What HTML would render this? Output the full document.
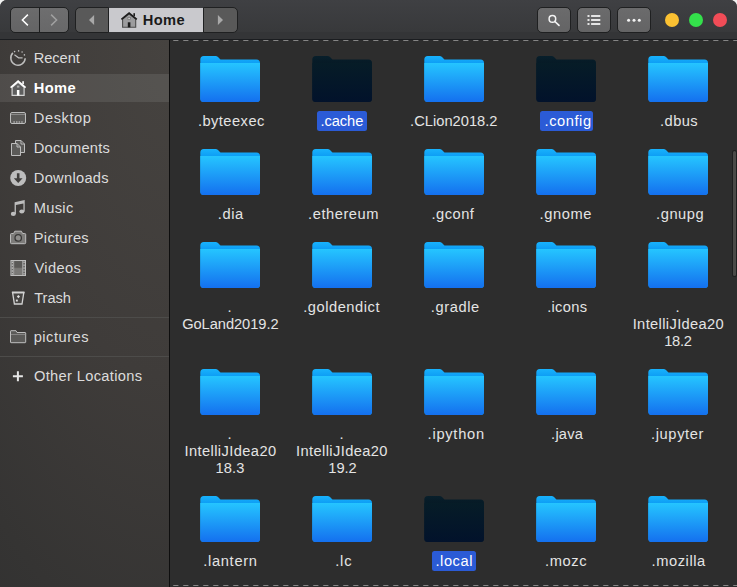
<!DOCTYPE html>
<html lang="en"><head><meta charset="utf-8"><title>Home</title>
<style>
html,body{margin:0;padding:0;background:#f2f2f2;}
body{width:737px;height:587px;position:relative;overflow:hidden;font-family:"Liberation Sans", sans-serif;font-size:14.67px;color:#e6e6e6;}
#win{position:absolute;left:0;top:0;width:737px;height:587px;background:#2d2d2d;border-radius:7px 7px 0 0;overflow:hidden;}
#hdr{position:absolute;left:0;top:0;width:737px;height:39px;background:linear-gradient(#3f4043 0,#38393b 31.5px,#343537 32px,#343537 100%);border-bottom:1px solid #1b1d20;}
.btn{position:absolute;top:7px;height:26px;box-sizing:border-box;border:1px solid #1f2021;background:linear-gradient(#6b6b6c,#646465);}
#side{position:absolute;left:0;top:40px;width:169px;height:547px;background:radial-gradient(ellipse 350px 750px at 100% 0%,#464340 0%,#3f3c3a 45%,#353433 80%,#303030 100%);border-right:1px solid #0e0e0e;}
.si{position:absolute;left:0;width:169px;height:30px;}
.si span{position:absolute;top:0;line-height:30px;white-space:nowrap;color:#dcdcdc;}
.si svg{position:absolute;left:10px;top:7px;overflow:visible;}
.sep{position:absolute;left:0;width:169px;height:1px;background:#4d4c4a;}
#main{position:absolute;left:170px;top:40px;width:567px;height:547px;background:#2d2d2d;}
.dash{position:absolute;left:3.4px;width:563.6px;height:1px;background:repeating-linear-gradient(90deg,rgba(136,136,136,.3) 0,#858585 .8px,#858585 4.9px,rgba(136,136,136,.2) 5.7px,transparent 5.8px,transparent 10px);}
.fo{position:absolute;}
.l{position:absolute;line-height:17px;height:17px;white-space:nowrap;color:#e4e4e4;}
.l.c{transform:translateX(-50%);}
.l.w{color:#fff;}
.sb{position:absolute;height:20px;background:#2b5bd6;border-radius:2.5px;}
</style></head><body><div id="win">

<svg width="0" height="0" style="position:absolute"><defs><linearGradient id="fb" x1="0" y1="0" x2="0" y2="1"><stop offset="0" stop-color="#25c5ff"/><stop offset="1" stop-color="#1470ef"/></linearGradient><linearGradient id="fd" x1="0" y1="0" x2="0" y2="1"><stop offset="0" stop-color="#061c27"/><stop offset="1" stop-color="#02122b"/></linearGradient><linearGradient id="fk" gradientUnits="userSpaceOnUse" x1="0" y1="0" x2="0" y2="7"><stop offset="0" stop-color="#18b2fc"/><stop offset="1" stop-color="#0e9ef5"/></linearGradient><linearGradient id="fe" gradientUnits="userSpaceOnUse" x1="0" y1="0" x2="0" y2="7"><stop offset="0" stop-color="#081f2b"/><stop offset="1" stop-color="#061a26"/></linearGradient></defs></svg>

<div id="hdr">
<div class="btn" style="left:10px;width:30px;border-radius:5px 0 0 5px;"></div>
<div class="btn" style="left:39px;width:30px;border-radius:0 5px 5px 0;background:linear-gradient(#6e6e6f,#686869);"></div>
<svg style="position:absolute;left:0;top:0" width="80" height="40" viewBox="0 0 80 40"><path d="M27.9 14.6 L22.4 20 L27.9 25.4" fill="none" stroke="#fff" stroke-width="1.5"/><path d="M51.1 14.6 L56.6 20 L51.1 25.4" fill="none" stroke="#a0a0a0" stroke-width="1.5"/></svg>
<div class="btn" style="left:75px;width:34px;border-radius:5px 0 0 5px;background:#595959;"></div>
<div class="btn" style="left:203px;width:34.5px;border-radius:0 5px 5px 0;background:#595959;"></div>
<div style="position:absolute;left:109px;top:8px;width:94px;height:24.3px;background:#c9c9cd;"></div>
<svg style="position:absolute;left:0;top:0" width="240" height="40" viewBox="0 0 240 40"><path d="M94.1 15 L89 20 L94.1 25Z" fill="#a8a8a8"/><path d="M217.9 15 L223 20 L217.9 25Z" fill="#a8a8a8"/></svg>
<svg style="position:absolute;left:121px;top:12px;overflow:visible" width="16" height="16" viewBox="0 0 16 16"><path d="M1.6 7 V15.2 H14.7 V7 L8.1 1.8 Z" fill="#9c9c9e" stroke="#4c4c4c" stroke-width="1.1"/><path d="M0.4 7.4 L8.1 1.1 L15.8 7.4" fill="none" stroke="#1e1e1e" stroke-width="1.7"/><rect x="12.4" y="1.2" width="1.6" height="3" fill="#1e1e1e"/><rect x="6.8" y="10.3" width="2.6" height="5" fill="#1a1a1a"/><rect x="6.9" y="5.4" width="2.4" height="2.2" fill="#c8c8c8" stroke="#6a6a6a" stroke-width=".6"/></svg>
<span id="hdrhome" style="position:absolute;left:142.80px;top:8px;line-height:24px;font-weight:bold;color:#1a1a1a;letter-spacing:0.350px">Home</span>
<div class="btn" style="left:537px;width:34px;border-radius:5px;"></div>
<div class="btn" style="left:577px;width:34px;border-radius:5px;"></div>
<div class="btn" style="left:617px;width:34px;border-radius:5px;"></div>
<svg style="position:absolute;left:538px;top:8px" width="112" height="24" viewBox="0 0 112 24"><circle cx="14.4" cy="10.9" r="3.3" fill="none" stroke="#f2f2f2" stroke-width="1.5"/><path d="M16.9 13.5 L21 17.4" stroke="#f2f2f2" stroke-width="1.7" stroke-linecap="round"/><g fill="#f2f2f2"><rect x="49.5" y="7.1" width="2" height="1.8"/><rect x="49.5" y="11.1" width="2" height="1.8"/><rect x="49.5" y="15.1" width="2" height="1.8"/><rect x="53.1" y="7.1" width="9.2" height="1.8"/><rect x="53.1" y="11.1" width="9.2" height="1.8"/><rect x="53.1" y="15.1" width="9.2" height="1.8"/><circle cx="90.6" cy="12.2" r="1.5"/><circle cx="96" cy="12.2" r="1.5"/><circle cx="101.3" cy="12.2" r="1.5"/></g></svg>
<div style="position:absolute;left:665px;top:13px;width:14px;height:14px;border-radius:50%;background:#fbc132;"></div>
<div style="position:absolute;left:689px;top:13px;width:14px;height:14px;border-radius:50%;background:#34e04b;"></div>
<div style="position:absolute;left:713px;top:13px;width:14px;height:14px;border-radius:50%;background:#f14c57;"></div>
</div>

<div id="side">
<div class="si" style="top:3px;"><svg width="16" height="16" viewBox="0 0 16 16"><path d="M2.9 2.9 A7.2 7.2 0 1 0 15.2 8.3" fill="none" stroke="#bdbdbd" stroke-width="1.5"/><g fill="#bdbdbd"><circle cx="4.6" cy="1.6" r=".8"/><circle cx="8.6" cy=".9" r=".8"/><circle cx="12.1" cy="2" r=".8"/><circle cx="14.4" cy="4.9" r=".8"/></g><path d="M4.4 4.8 L8.6 7.8 H12.6" fill="none" stroke="#bdbdbd" stroke-width="1.2"/></svg><span style="left:33.80px;letter-spacing:-0.090px;">Recent</span></div>
<div style="position:absolute;left:0;top:33.6px;width:169px;height:28.4px;background:rgba(255,255,255,0.09)"></div>
<div class="si" style="top:33px;"><svg width="16" height="16" viewBox="0 0 16 16"><path d="M2.1 7.2 V15.4 H14.1 V7.2 L8.1 2.2 Z" fill="#5e5e5e" stroke="#d4d4d4" stroke-width="1.2"/><path d="M0.6 7.6 L8.1 1.2 L15.6 7.6" fill="none" stroke="#fff" stroke-width="1.7"/><rect x="12.3" y="1.2" width="1.6" height="3" fill="#fff"/><rect x="6.9" y="10" width="2.5" height="5.6" fill="#fff"/><rect x="6.9" y="5.6" width="2.5" height="2" fill="#a8a8a8"/></svg><span style="left:33.70px;letter-spacing:0.400px;font-weight:bold;color:#fff;">Home</span></div>
<div class="si" style="top:63px;"><svg width="16" height="16" viewBox="0 0 16 16"><rect x=".5" y="2.5" width="15" height="11" rx="1.5" fill="#5b5a58" stroke="#bdbdbd"/><path d="M1 4.5 H15" stroke="#8a8988" stroke-width="1"/><g fill="#bdbdbd"><rect x="3.4" y="11.4" width="1.5" height="1.2"/><rect x="6" y="11.4" width="1.5" height="1.2"/><rect x="8.6" y="11.4" width="1.5" height="1.2"/><rect x="11.2" y="11.4" width="1.5" height="1.2"/></g></svg><span style="left:33.80px;letter-spacing:0.567px;">Desktop</span></div>
<div class="si" style="top:93px;"><svg width="16" height="16" viewBox="0 0 16 16"><path d="M5.5 .5 H11 L14.5 4 V12.5 H5.5 Z M11 .5 V4 H14.5" fill="#5b5a58" stroke="#bdbdbd"/><path d="M1.5 3.5 H7 L10.5 7 V15.5 H1.5 Z M7 3.5 V7 H10.5" fill="#5b5a58" stroke="#bdbdbd"/></svg><span style="left:33.80px;letter-spacing:0.238px;">Documents</span></div>
<div class="si" style="top:123px;"><svg width="16" height="16" viewBox="0 0 16 16"><circle cx="8.2" cy="8" r="8" fill="#bdbdbd"/><path d="M6.9 3.2 H9.5 V8.2 H12.6 L8.2 13 L3.8 8.2 H6.9 Z" fill="#403e3c"/></svg><span style="left:33.80px;letter-spacing:0.288px;">Downloads</span></div>
<div class="si" style="top:153px;"><svg width="16" height="16" viewBox="0 0 16 16"><g fill="#bdbdbd"><ellipse cx="3.3" cy="13.9" rx="2.5" ry="2.1"/><ellipse cx="11.8" cy="11.5" rx="2.5" ry="2.1"/><path d="M4.6 2.2 L14.7 0 V11.6 H13.4 V3.4 L5.9 5.1 V14 H4.6 Z"/></g></svg><span style="left:33.80px;letter-spacing:0.287px;">Music</span></div>
<div class="si" style="top:183px;"><svg width="16" height="16" viewBox="0 0 16 16"><path d="M1.5 3.5 H3.6 L4.8 1.2 H11.4 L12.6 3.5 H14.7 Q15.7 3.5 15.7 4.5 V12.7 Q15.7 13.7 14.7 13.7 H1.5 Q.5 13.7 .5 12.7 V4.5 Q.5 3.5 1.5 3.5Z" fill="#7d7c7a" stroke="#bdbdbd"/><circle cx="8.2" cy="7.9" r="3.2" fill="#8f8e8c" stroke="#3a3938" stroke-width="1.3"/></svg><span style="left:33.80px;letter-spacing:0.279px;">Pictures</span></div>
<div class="si" style="top:213px;"><svg width="16" height="16" viewBox="0 0 16 16"><rect x=".9" y=".5" width="14.6" height="15" fill="#6c6b69" stroke="#bdbdbd"/><rect x="4" y="1.2" width="8.4" height="6.4" fill="#5a5957"/><rect x="4" y="8.2" width="8.4" height="6.6" fill="#7a7977"/><path d="M3.7 .5 V15.5 M12.7 .5 V15.5" stroke="#bdbdbd" stroke-width=".7"/><g fill="#bdbdbd"><rect x="1.7" y="1.6" width="1.3" height="1.4"/><rect x="13.4" y="1.6" width="1.3" height="1.4"/><rect x="1.7" y="4.5" width="1.3" height="1.4"/><rect x="13.4" y="4.5" width="1.3" height="1.4"/><rect x="1.7" y="7.4" width="1.3" height="1.4"/><rect x="13.4" y="7.4" width="1.3" height="1.4"/><rect x="1.7" y="10.3" width="1.3" height="1.4"/><rect x="13.4" y="10.3" width="1.3" height="1.4"/><rect x="1.7" y="13.1" width="1.3" height="1.4"/><rect x="13.4" y="13.1" width="1.3" height="1.4"/></g></svg><span style="left:34.50px;letter-spacing:0.340px;">Videos</span></div>
<div class="si" style="top:243px;"><svg width="16" height="16" viewBox="0 0 16 16"><path d="M2.6 2.6 H13.8 L12 14 H4.4 Z" fill="#474543" stroke="#d2d2d2" stroke-width="1.3"/><path d="M1.9 2.4 H14.5" stroke="#d2d2d2" stroke-width="1.8"/><path d="M8.4 4.9 L10 6.6 L8.4 8.3 L6.8 6.6 Z" fill="#e0e0e0"/><rect x="5.9" y="9.6" width="1.9" height="1.9" fill="#e0e0e0"/></svg><span style="left:34.20px;letter-spacing:-0.050px;">Trash</span></div>
<div class="si" style="top:282px;"><svg width="16" height="16" viewBox="0 0 16 16"><path d="M.5 2.2 Q.5 1.7 1 1.7 H6 L7 3.5 H15.2 Q15.7 3.5 15.7 4 V13.2 Q15.7 13.7 15.2 13.7 H1 Q.5 13.7 .5 13.2 Z" fill="#5b5a58" stroke="#bdbdbd"/><path d="M1 5.5 H15.2" stroke="#8a8988" stroke-width=".9"/></svg><span style="left:33.70px;letter-spacing:0.500px;">pictures</span></div>
<div class="si" style="top:321px;"><svg width="16" height="16" viewBox="0 0 16 16"><path d="M2.9 8.2 H12.9 M7.9 3.2 V13.2" stroke="#e6e6e6" stroke-width="2"/></svg><span style="left:33.95px;letter-spacing:0.339px;">Other Locations</span></div>
<div class="sep" style="top:277px"></div><div class="sep" style="top:316px"></div>
</div>

<div id="main"><div class="dash" style="top:0"></div><div class="dash" style="top:545px"></div>
<svg class="fo" style="left:30px;top:16px" width="60" height="46" viewBox="0 0 60 46"><path d="M.3 3.5 Q.3 0 3.8 0 H15.5 Q17 0 18 1 L20.5 3.5 H56.5 Q60 3.5 60 7 V42.5 Q60 46 56.5 46 H3.8 Q.3 46 .3 42.5 Z" fill="url(#fk)"/><path d="M.3 7 H60 V42.5 Q60 46 56.5 46 H3.8 Q.3 46 .3 42.5 Z" fill="url(#fb)"/></svg>
<span class="l" style="left:27.90px;top:73px;letter-spacing:0.462px">.byteexec</span>
<svg class="fo" style="left:142px;top:16px" width="60" height="46" viewBox="0 0 60 46"><path d="M.3 3.5 Q.3 0 3.8 0 H15.5 Q17 0 18 1 L20.5 3.5 H56.5 Q60 3.5 60 7 V42.5 Q60 46 56.5 46 H3.8 Q.3 46 .3 42.5 Z" fill="url(#fe)"/><path d="M.3 7 H60 V42.5 Q60 46 56.5 46 H3.8 Q.3 46 .3 42.5 Z" fill="url(#fd)"/></svg>
<div class="sb" style="left:147px;top:71px;width:50px"></div>
<span class="l w" style="left:150.40px;top:73px;letter-spacing:-0.050px">.cache</span>
<svg class="fo" style="left:254px;top:16px" width="60" height="46" viewBox="0 0 60 46"><path d="M.3 3.5 Q.3 0 3.8 0 H15.5 Q17 0 18 1 L20.5 3.5 H56.5 Q60 3.5 60 7 V42.5 Q60 46 56.5 46 H3.8 Q.3 46 .3 42.5 Z" fill="url(#fk)"/><path d="M.3 7 H60 V42.5 Q60 46 56.5 46 H3.8 Q.3 46 .3 42.5 Z" fill="url(#fb)"/></svg>
<span class="l" style="left:240.05px;top:73px;letter-spacing:0.023px">.CLion2018.2</span>
<svg class="fo" style="left:366px;top:16px" width="60" height="46" viewBox="0 0 60 46"><path d="M.3 3.5 Q.3 0 3.8 0 H15.5 Q17 0 18 1 L20.5 3.5 H56.5 Q60 3.5 60 7 V42.5 Q60 46 56.5 46 H3.8 Q.3 46 .3 42.5 Z" fill="url(#fe)"/><path d="M.3 7 H60 V42.5 Q60 46 56.5 46 H3.8 Q.3 46 .3 42.5 Z" fill="url(#fd)"/></svg>
<div class="sb" style="left:370px;top:71px;width:53px"></div>
<span class="l w" style="left:374.60px;top:73px;letter-spacing:0.550px">.config</span>
<svg class="fo" style="left:478px;top:16px" width="60" height="46" viewBox="0 0 60 46"><path d="M.3 3.5 Q.3 0 3.8 0 H15.5 Q17 0 18 1 L20.5 3.5 H56.5 Q60 3.5 60 7 V42.5 Q60 46 56.5 46 H3.8 Q.3 46 .3 42.5 Z" fill="url(#fk)"/><path d="M.3 7 H60 V42.5 Q60 46 56.5 46 H3.8 Q.3 46 .3 42.5 Z" fill="url(#fb)"/></svg>
<span class="l" style="left:490.10px;top:73px;letter-spacing:0.438px">.dbus</span>
<svg class="fo" style="left:30px;top:109px" width="60" height="46" viewBox="0 0 60 46"><path d="M.3 3.5 Q.3 0 3.8 0 H15.5 Q17 0 18 1 L20.5 3.5 H56.5 Q60 3.5 60 7 V42.5 Q60 46 56.5 46 H3.8 Q.3 46 .3 42.5 Z" fill="url(#fk)"/><path d="M.3 7 H60 V42.5 Q60 46 56.5 46 H3.8 Q.3 46 .3 42.5 Z" fill="url(#fb)"/></svg>
<span class="l" style="left:47.70px;top:166px;letter-spacing:0.617px">.dia</span>
<svg class="fo" style="left:142px;top:109px" width="60" height="46" viewBox="0 0 60 46"><path d="M.3 3.5 Q.3 0 3.8 0 H15.5 Q17 0 18 1 L20.5 3.5 H56.5 Q60 3.5 60 7 V42.5 Q60 46 56.5 46 H3.8 Q.3 46 .3 42.5 Z" fill="url(#fk)"/><path d="M.3 7 H60 V42.5 Q60 46 56.5 46 H3.8 Q.3 46 .3 42.5 Z" fill="url(#fb)"/></svg>
<span class="l" style="left:138.10px;top:166px;letter-spacing:0.550px">.ethereum</span>
<svg class="fo" style="left:254px;top:109px" width="60" height="46" viewBox="0 0 60 46"><path d="M.3 3.5 Q.3 0 3.8 0 H15.5 Q17 0 18 1 L20.5 3.5 H56.5 Q60 3.5 60 7 V42.5 Q60 46 56.5 46 H3.8 Q.3 46 .3 42.5 Z" fill="url(#fk)"/><path d="M.3 7 H60 V42.5 Q60 46 56.5 46 H3.8 Q.3 46 .3 42.5 Z" fill="url(#fb)"/></svg>
<span class="l" style="left:261.55px;top:166px;letter-spacing:0.490px">.gconf</span>
<svg class="fo" style="left:366px;top:109px" width="60" height="46" viewBox="0 0 60 46"><path d="M.3 3.5 Q.3 0 3.8 0 H15.5 Q17 0 18 1 L20.5 3.5 H56.5 Q60 3.5 60 7 V42.5 Q60 46 56.5 46 H3.8 Q.3 46 .3 42.5 Z" fill="url(#fk)"/><path d="M.3 7 H60 V42.5 Q60 46 56.5 46 H3.8 Q.3 46 .3 42.5 Z" fill="url(#fb)"/></svg>
<span class="l" style="left:369.60px;top:166px;letter-spacing:0.580px">.gnome</span>
<svg class="fo" style="left:478px;top:109px" width="60" height="46" viewBox="0 0 60 46"><path d="M.3 3.5 Q.3 0 3.8 0 H15.5 Q17 0 18 1 L20.5 3.5 H56.5 Q60 3.5 60 7 V42.5 Q60 46 56.5 46 H3.8 Q.3 46 .3 42.5 Z" fill="url(#fk)"/><path d="M.3 7 H60 V42.5 Q60 46 56.5 46 H3.8 Q.3 46 .3 42.5 Z" fill="url(#fb)"/></svg>
<span class="l" style="left:486.05px;top:166px;letter-spacing:0.560px">.gnupg</span>
<svg class="fo" style="left:30px;top:202px" width="60" height="46" viewBox="0 0 60 46"><path d="M.3 3.5 Q.3 0 3.8 0 H15.5 Q17 0 18 1 L20.5 3.5 H56.5 Q60 3.5 60 7 V42.5 Q60 46 56.5 46 H3.8 Q.3 46 .3 42.5 Z" fill="url(#fk)"/><path d="M.3 7 H60 V42.5 Q60 46 56.5 46 H3.8 Q.3 46 .3 42.5 Z" fill="url(#fb)"/></svg>
<span class="l c" style="left:59.6px;top:259px">.</span>
<span class="l" style="left:12.15px;top:276px;letter-spacing:-0.050px">GoLand2019.2</span>
<svg class="fo" style="left:142px;top:202px" width="60" height="46" viewBox="0 0 60 46"><path d="M.3 3.5 Q.3 0 3.8 0 H15.5 Q17 0 18 1 L20.5 3.5 H56.5 Q60 3.5 60 7 V42.5 Q60 46 56.5 46 H3.8 Q.3 46 .3 42.5 Z" fill="url(#fk)"/><path d="M.3 7 H60 V42.5 Q60 46 56.5 46 H3.8 Q.3 46 .3 42.5 Z" fill="url(#fb)"/></svg>
<span class="l" style="left:133.20px;top:259px;letter-spacing:0.540px">.goldendict</span>
<svg class="fo" style="left:254px;top:202px" width="60" height="46" viewBox="0 0 60 46"><path d="M.3 3.5 Q.3 0 3.8 0 H15.5 Q17 0 18 1 L20.5 3.5 H56.5 Q60 3.5 60 7 V42.5 Q60 46 56.5 46 H3.8 Q.3 46 .3 42.5 Z" fill="url(#fk)"/><path d="M.3 7 H60 V42.5 Q60 46 56.5 46 H3.8 Q.3 46 .3 42.5 Z" fill="url(#fb)"/></svg>
<span class="l" style="left:260.75px;top:259px;letter-spacing:0.600px">.gradle</span>
<svg class="fo" style="left:366px;top:202px" width="60" height="46" viewBox="0 0 60 46"><path d="M.3 3.5 Q.3 0 3.8 0 H15.5 Q17 0 18 1 L20.5 3.5 H56.5 Q60 3.5 60 7 V42.5 Q60 46 56.5 46 H3.8 Q.3 46 .3 42.5 Z" fill="url(#fk)"/><path d="M.3 7 H60 V42.5 Q60 46 56.5 46 H3.8 Q.3 46 .3 42.5 Z" fill="url(#fb)"/></svg>
<span class="l" style="left:377.20px;top:259px;letter-spacing:0.300px">.icons</span>
<svg class="fo" style="left:478px;top:202px" width="60" height="46" viewBox="0 0 60 46"><path d="M.3 3.5 Q.3 0 3.8 0 H15.5 Q17 0 18 1 L20.5 3.5 H56.5 Q60 3.5 60 7 V42.5 Q60 46 56.5 46 H3.8 Q.3 46 .3 42.5 Z" fill="url(#fk)"/><path d="M.3 7 H60 V42.5 Q60 46 56.5 46 H3.8 Q.3 46 .3 42.5 Z" fill="url(#fb)"/></svg>
<span class="l c" style="left:507.6px;top:259px">.</span>
<span class="l" style="left:462.70px;top:276px;letter-spacing:0.362px">IntelliJIdea20</span>
<span class="l" style="left:494.15px;top:293px;letter-spacing:-0.217px">18.2</span>
<svg class="fo" style="left:30px;top:329px" width="60" height="46" viewBox="0 0 60 46"><path d="M.3 3.5 Q.3 0 3.8 0 H15.5 Q17 0 18 1 L20.5 3.5 H56.5 Q60 3.5 60 7 V42.5 Q60 46 56.5 46 H3.8 Q.3 46 .3 42.5 Z" fill="url(#fk)"/><path d="M.3 7 H60 V42.5 Q60 46 56.5 46 H3.8 Q.3 46 .3 42.5 Z" fill="url(#fb)"/></svg>
<span class="l c" style="left:59.6px;top:386px">.</span>
<span class="l" style="left:14.40px;top:403px;letter-spacing:0.415px">IntelliJIdea20</span>
<span class="l" style="left:45.45px;top:420px;letter-spacing:0.117px">18.3</span>
<svg class="fo" style="left:142px;top:329px" width="60" height="46" viewBox="0 0 60 46"><path d="M.3 3.5 Q.3 0 3.8 0 H15.5 Q17 0 18 1 L20.5 3.5 H56.5 Q60 3.5 60 7 V42.5 Q60 46 56.5 46 H3.8 Q.3 46 .3 42.5 Z" fill="url(#fk)"/><path d="M.3 7 H60 V42.5 Q60 46 56.5 46 H3.8 Q.3 46 .3 42.5 Z" fill="url(#fb)"/></svg>
<span class="l c" style="left:171.6px;top:386px">.</span>
<span class="l" style="left:126.05px;top:403px;letter-spacing:0.392px">IntelliJIdea20</span>
<span class="l" style="left:158.35px;top:420px;letter-spacing:-0.100px">19.2</span>
<svg class="fo" style="left:254px;top:329px" width="60" height="46" viewBox="0 0 60 46"><path d="M.3 3.5 Q.3 0 3.8 0 H15.5 Q17 0 18 1 L20.5 3.5 H56.5 Q60 3.5 60 7 V42.5 Q60 46 56.5 46 H3.8 Q.3 46 .3 42.5 Z" fill="url(#fk)"/><path d="M.3 7 H60 V42.5 Q60 46 56.5 46 H3.8 Q.3 46 .3 42.5 Z" fill="url(#fb)"/></svg>
<span class="l" style="left:257.60px;top:386px;letter-spacing:0.736px">.ipython</span>
<svg class="fo" style="left:366px;top:329px" width="60" height="46" viewBox="0 0 60 46"><path d="M.3 3.5 Q.3 0 3.8 0 H15.5 Q17 0 18 1 L20.5 3.5 H56.5 Q60 3.5 60 7 V42.5 Q60 46 56.5 46 H3.8 Q.3 46 .3 42.5 Z" fill="url(#fk)"/><path d="M.3 7 H60 V42.5 Q60 46 56.5 46 H3.8 Q.3 46 .3 42.5 Z" fill="url(#fb)"/></svg>
<span class="l" style="left:381.10px;top:386px;letter-spacing:0.213px">.java</span>
<svg class="fo" style="left:478px;top:329px" width="60" height="46" viewBox="0 0 60 46"><path d="M.3 3.5 Q.3 0 3.8 0 H15.5 Q17 0 18 1 L20.5 3.5 H56.5 Q60 3.5 60 7 V42.5 Q60 46 56.5 46 H3.8 Q.3 46 .3 42.5 Z" fill="url(#fk)"/><path d="M.3 7 H60 V42.5 Q60 46 56.5 46 H3.8 Q.3 46 .3 42.5 Z" fill="url(#fb)"/></svg>
<span class="l" style="left:481.05px;top:386px;letter-spacing:0.614px">.jupyter</span>
<svg class="fo" style="left:30px;top:456px" width="60" height="46" viewBox="0 0 60 46"><path d="M.3 3.5 Q.3 0 3.8 0 H15.5 Q17 0 18 1 L20.5 3.5 H56.5 Q60 3.5 60 7 V42.5 Q60 46 56.5 46 H3.8 Q.3 46 .3 42.5 Z" fill="url(#fk)"/><path d="M.3 7 H60 V42.5 Q60 46 56.5 46 H3.8 Q.3 46 .3 42.5 Z" fill="url(#fb)"/></svg>
<span class="l" style="left:33.20px;top:513px;letter-spacing:0.700px">.lantern</span>
<svg class="fo" style="left:142px;top:456px" width="60" height="46" viewBox="0 0 60 46"><path d="M.3 3.5 Q.3 0 3.8 0 H15.5 Q17 0 18 1 L20.5 3.5 H56.5 Q60 3.5 60 7 V42.5 Q60 46 56.5 46 H3.8 Q.3 46 .3 42.5 Z" fill="url(#fk)"/><path d="M.3 7 H60 V42.5 Q60 46 56.5 46 H3.8 Q.3 46 .3 42.5 Z" fill="url(#fb)"/></svg>
<span class="l" style="left:165.25px;top:513px;letter-spacing:0.800px">.lc</span>
<svg class="fo" style="left:254px;top:456px" width="60" height="46" viewBox="0 0 60 46"><path d="M.3 3.5 Q.3 0 3.8 0 H15.5 Q17 0 18 1 L20.5 3.5 H56.5 Q60 3.5 60 7 V42.5 Q60 46 56.5 46 H3.8 Q.3 46 .3 42.5 Z" fill="url(#fe)"/><path d="M.3 7 H60 V42.5 Q60 46 56.5 46 H3.8 Q.3 46 .3 42.5 Z" fill="url(#fd)"/></svg>
<div class="sb" style="left:262px;top:511px;width:44px"></div>
<span class="l w" style="left:265.40px;top:513px;letter-spacing:0.580px">.local</span>
<svg class="fo" style="left:366px;top:456px" width="60" height="46" viewBox="0 0 60 46"><path d="M.3 3.5 Q.3 0 3.8 0 H15.5 Q17 0 18 1 L20.5 3.5 H56.5 Q60 3.5 60 7 V42.5 Q60 46 56.5 46 H3.8 Q.3 46 .3 42.5 Z" fill="url(#fk)"/><path d="M.3 7 H60 V42.5 Q60 46 56.5 46 H3.8 Q.3 46 .3 42.5 Z" fill="url(#fb)"/></svg>
<span class="l" style="left:375.10px;top:513px;letter-spacing:0.575px">.mozc</span>
<svg class="fo" style="left:478px;top:456px" width="60" height="46" viewBox="0 0 60 46"><path d="M.3 3.5 Q.3 0 3.8 0 H15.5 Q17 0 18 1 L20.5 3.5 H56.5 Q60 3.5 60 7 V42.5 Q60 46 56.5 46 H3.8 Q.3 46 .3 42.5 Z" fill="url(#fk)"/><path d="M.3 7 H60 V42.5 Q60 46 56.5 46 H3.8 Q.3 46 .3 42.5 Z" fill="url(#fb)"/></svg>
<span class="l" style="left:481.55px;top:513px;letter-spacing:0.571px">.mozilla</span>
<div style="position:absolute;left:562.5px;top:111px;width:3px;height:125px;border-radius:2px;background:#4b4a48;box-shadow:0 0 0 1px #1f1f1f;"></div>
</div>

</div></body></html>
